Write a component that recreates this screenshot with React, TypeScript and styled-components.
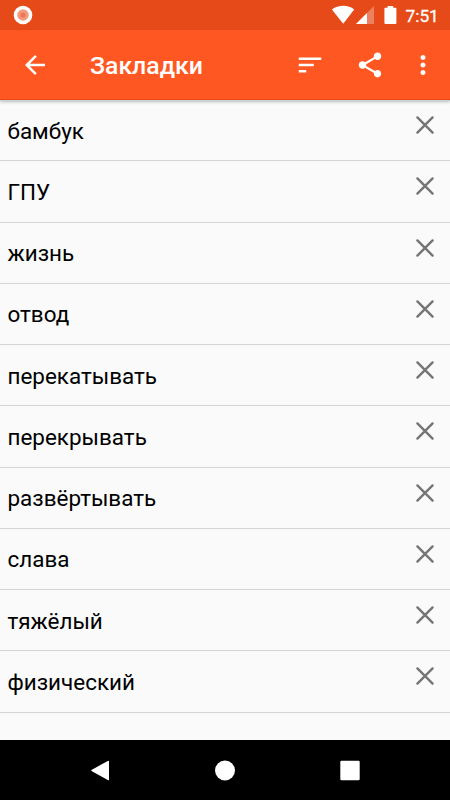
import React from "react";
import styled, { createGlobalStyle } from "styled-components";

const GlobalStyle = createGlobalStyle`
  html, body { margin: 0; padding: 0; background: #fafafa; }
  * { box-sizing: border-box; }
`;

const Screen = styled.div`
  width: 450px;
  height: 800px;
  display: flex;
  flex-direction: column;
  overflow: hidden;
  background: #fafafa;
  font-family: Roboto, "Noto Sans", sans-serif;
`;

const StatusBar = styled.div`
  flex: none;
  height: 30px;
  display: flex;
  align-items: center;
  justify-content: space-between;
  padding: 0 10px 0 12.5px;
  background: #e64a19;
  color: #fff;
`;

const StatusIcons = styled.div`
  display: flex;
  align-items: center;
`;

const Clock = styled.span`
  width: 34.5px;
  margin-left: 8.5px;
  padding-top: 1px;
  font-size: 17.3px;
  font-weight: 400;
  -webkit-text-stroke: 0.3px #fff;
  line-height: 30px;
  white-space: nowrap;
`;

const Toolbar = styled.header`
  flex: none;
  height: 70px;
  display: flex;
  align-items: center;
  padding: 0 12.5px 0 20px;
  background: #ff5722;
  border-bottom: 1px solid #ec4716;
  box-shadow: 0 1px 0 #c2d1d1, 0 2px 3px rgba(0, 0, 0, 0.25);
  z-index: 1;
`;

const IconButton = styled.button<{ $gap?: number }>`
  width: 30px;
  height: 30px;
  margin: 1px 0 0 ${({ $gap = 0 }) => $gap}px;
  padding: 0;
  border: 0;
  background: none;
  color: inherit;
  display: block;
  svg { display: block; }
`;

const Title = styled.h1`
  flex: 1;
  margin: 3px 0 0 40px;
  color: #fff;
  font-size: 24.8px;
  font-weight: 500;
  line-height: 30px;
`;

const List = styled.ul`
  flex: 1;
  min-height: 0;
  margin: 0;
  padding: 0;
  list-style: none;
`;

const Row = styled.li`
  height: 61.25px;
  display: flex;
  align-items: flex-start;
  justify-content: space-between;
  padding: 0 10px 0 7.5px;
  border-bottom: 1px solid #d4d4d4;
`;

const Word = styled.span`
  padding-top: 0.6px;
  color: #000;
  font-size: 22.45px;
  line-height: 60px;
`;

const RemoveButton = styled(IconButton)`
  margin-top: 10px;
`;

const NavBar = styled.nav`
  flex: none;
  height: 60px;
  display: flex;
  justify-content: center;
  align-items: center;
  gap: 95px;
  background: #000;
`;

const Icon = ({ d }: { d: string }) => (
  <svg width="30" height="30" viewBox="0 0 24 24" fill="#fff">
    <path d={d} />
  </svg>
);

const words = [
  "бамбук",
  "ГПУ",
  "жизнь",
  "отвод",
  "перекатывать",
  "перекрывать",
  "развёртывать",
  "слава",
  "тяжёлый",
  "физический",
];

export default function App() {
  return (
    <>
      <GlobalStyle />
      <Screen>
        <StatusBar>
          <svg width="20" height="20" viewBox="0 0 20 20">
            <circle cx="10" cy="10" r="9.3" fill="#fff" />
            <circle cx="10" cy="10" r="5.8" fill="#f29b80" />
            <circle cx="10" cy="10" r="2.6" fill="#ed7654" />
          </svg>
          <StatusIcons>
            <svg width="66" height="30" viewBox="331 0 66 30" fill="#fff">
              <path d="M343.2 23.8 331.9 9.4Q336.8 5.7 343.2 5.7T354.2 9.4Z" />
              <path d="M374 6V24H356Z" fillOpacity="0.3" />
              <path d="M367 13V24H356Z" />
              <path d="M387.6 6h5.6v1.8h2.2a1 1 0 0 1 1 1V23a1 1 0 0 1-1 1h-10a1 1 0 0 1-1-1V8.8a1 1 0 0 1 1-1h2.2z" />
            </svg>
            <Clock>7:51</Clock>
          </StatusIcons>
        </StatusBar>
        <Toolbar>
          <IconButton aria-label="Назад">
            <Icon d="M20 11H7.83l5.59-5.59L12 4l-8 8 8 8 1.41-1.41L7.83 13H20v-2z" />
          </IconButton>
          <Title>Закладки</Title>
          <IconButton aria-label="Сортировка">
            <Icon d="M3 18h6v-2H3v2zM3 6v2h18V6H3zm0 7h12v-2H3v2z" />
          </IconButton>
          <IconButton $gap={30} aria-label="Поделиться">
            <Icon d="M18 16.08c-.76 0-1.44.3-1.96.77L8.91 12.7c.05-.23.09-.46.09-.7s-.04-.47-.09-.7l7.05-4.11c.54.5 1.25.81 2.04.81 1.66 0 3-1.34 3-3s-1.34-3-3-3-3 1.34-3 3c0 .24.04.47.09.7L8.04 9.81C7.5 9.31 6.79 9 6 9c-1.66 0-3 1.34-3 3s1.34 3 3 3c.79 0 1.5-.31 2.04-.81l7.12 4.16c-.05.21-.08.43-.08.65 0 1.61 1.31 2.92 2.92 2.92s2.92-1.31 2.92-2.92-1.31-2.92-2.92-2.92z" />
          </IconButton>
          <IconButton $gap={22.5} aria-label="Ещё">
            <Icon d="M12 8c1.1 0 2-.9 2-2s-.9-2-2-2-2 .9-2 2 .9 2 2 2zm0 2c-1.1 0-2 .9-2 2s.9 2 2 2 2-.9 2-2-.9-2-2-2zm0 6c-1.1 0-2 .9-2 2s.9 2 2 2 2-.9 2-2-.9-2-2-2z" />
          </IconButton>
        </Toolbar>
        <List>
          {words.map((word) => (
            <Row key={word}>
              <Word>{word}</Word>
              <RemoveButton aria-label="Удалить">
                <svg width="30" height="30" viewBox="0 0 30 30">
                  <path d="M7.4 7.4 22.6 22.6M22.6 7.4 7.4 22.6" stroke="#757575" strokeWidth="2.4" strokeLinecap="round" />
                </svg>
              </RemoveButton>
            </Row>
          ))}
        </List>
        <NavBar>
          <IconButton aria-label="Назад">
            <svg width="30" height="30" viewBox="0 0 30 30">
              <path d="M22.8 4.9Q24 4.3 24 5.6V23.4Q24 24.7 22.8 24.1L6.9 15.2Q5.6 14.5 6.9 13.8Z" fill="#fff" />
            </svg>
          </IconButton>
          <IconButton aria-label="Домой">
            <svg width="30" height="30" viewBox="0 0 30 30">
              <circle cx="15" cy="14.5" r="10" fill="#fff" />
            </svg>
          </IconButton>
          <IconButton aria-label="Обзор">
            <svg width="30" height="30" viewBox="0 0 30 30">
              <rect x="5.3" y="4.8" width="19.4" height="19.4" rx="1.2" fill="#fff" />
            </svg>
          </IconButton>
        </NavBar>
      </Screen>
    </>
  );
}
